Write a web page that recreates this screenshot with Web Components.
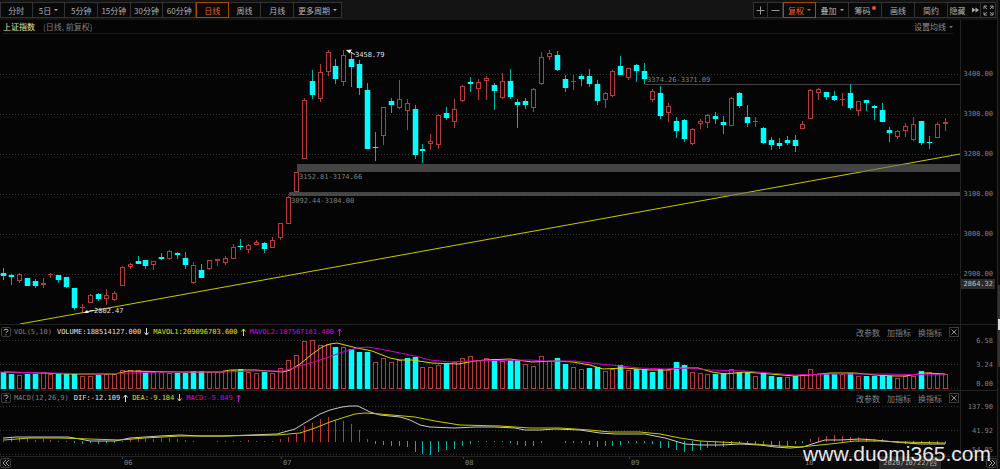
<!DOCTYPE html>
<html lang="zh-CN">
<head>
<meta charset="utf-8">
<title>上证指数 日线</title>
<style>
html, body { margin: 0; height: 100%; background: #050505; }
</style>
</head>
<body>
<stock-app></stock-app>

<template id="tpl-tool">
<style>
:host { display: flex; }
button { flex: 1; display: flex; align-items: center; justify-content: center; gap: 3px; margin: 0; padding: 0; min-width: 0;
  border: 1px solid #333; border-left-width: 0; background: #090909; color: #b0b0b0; font: inherit; white-space: nowrap; cursor: pointer; }
:host([first]) button { border-left-width: 1px; }
:host([active]) button { color: #f06010; border: 1px solid #b04408; }
i { width: 0; height: 0; border: 2px solid transparent; border-top-color: currentColor; border-bottom-width: 0; display: none; }
:host([menu]) i { display: block; }
b { display: none; width: 4px; height: 4px; border-radius: 50%; background: #ff4040; margin: -5px 0 0 -2px; }
:host([dot]) b { display: block; }
</style>
<button type="button"><slot></slot><i></i><b></b></button>
</template>

<template id="tpl-bar">
<style>
:host { display: flex; justify-content: space-between; box-sizing: border-box; height: 20px; padding: 2px 1px 2px 0; background: #141414; }
div { display: flex; }
.periods { width: 294px; }
.periods > * { flex: 1 1 0; }
.more { width: 48px; }
.ico { width: 15px; }
.std { width: 33px; }
svg { display: block; fill: none; stroke: #999; stroke-width: 1; }
</style>
<div>
  <div class="periods">
    <tool-button first>分时</tool-button><tool-button menu>5日</tool-button><tool-button>5分钟</tool-button>
    <tool-button>15分钟</tool-button><tool-button>30分钟</tool-button><tool-button>60分钟</tool-button>
    <tool-button active>日线</tool-button><tool-button>周线</tool-button><tool-button>月线</tool-button>
  </div>
  <tool-button class="more" menu>更多周期</tool-button>
</div>
<div>
  <tool-button first class="ico"><svg width="9" height="9"><path d="M0.500 4.500h8M4.500 .5v8"/></svg></tool-button>
  <tool-button class="ico"><svg width="9" height="9"><path d="M.5 4.500h8"/></svg></tool-button>
  <tool-button class="std" active menu>复权</tool-button>
  <tool-button class="std" menu>叠加</tool-button>
  <tool-button class="std" dot>筹码</tool-button>
  <tool-button class="std">画线</tool-button>
  <tool-button class="std">简约</tool-button>
  <tool-button class="std">隐藏<svg width="7" height="6" style="margin-left:3px"><path fill="#aaa" stroke="none" d="M0 0.500l3.500 2.500-3.500 2.500zM3.500 .5l3.500 2.500-3.500 2.500z"/></svg></tool-button>
  <tool-button class="ico"><svg width="11" height="11"><path d="M1 4V1h3M1 1l3 3M7 1h3v3M10 1L7 4M1 7v3h3M1 10l3-3M10 7v3H7M10 10L7 7"/></svg></tool-button>
</div>
</template>

<template id="tpl-title">
<style>
:host { display: grid; grid-template-columns: 1fr 37px; height: 14px; }
header { display: flex; align-items: center; margin: 0 7px 0 3px; border-bottom: 1px solid #1a1a1a; color: #808080; }
h1 { margin: 0 8px 0 0; font: inherit; color: #e6e69a; }
button { margin-left: auto; padding: 0; border: 0; background: none; font: inherit; color: #909090; display: flex; align-items: center; gap: 3px; }
i { border: 2px solid transparent; border-top-color: #777; border-bottom-width: 0; }
aside { border-left: 1px solid #222; }
</style>
<header><h1>上证指数</h1><span>(日线, 前复权)</span><button type="button">设置均线<i></i></button></header><aside></aside>
</template>

<template id="tpl-head">
<style>
:host { display: flex; align-items: center; height: 14px; padding: 0 1px; white-space: nowrap; }
button { padding: 0; margin: 0; border: 0; background: none; font: inherit; color: #808080; }
.box { width: 10px; height: 10px; box-sizing: border-box; border: 1px solid #3c3c3c; border-radius: 2px; display: flex; align-items: center; justify-content: center; color: #bbb; }
.vals { display: flex; align-items: center; font: 7px "DejaVu Sans Mono", monospace; margin-left: 3px; }
.name { color: #808080; margin-right: 5px; }
.val { display: flex; align-items: center; margin-right: 4px; gap: 3px; }
svg { fill: none; stroke: currentColor; display: block; }
.acts { margin-left: auto; display: flex; align-items: center; gap: 7px; font: 8px "Noto Sans CJK SC", sans-serif; }
.close { border-radius: 0; }
</style>
<button class="box" type="button" aria-label="帮助"><svg width="6" height="8"><path d="M1 2.500C1 .8 5 .8 5 2.500 5 4 3 3.500 3 5.200M3 6.300v1"/></svg></button>
<div class="vals"></div>
<div class="acts"><button type="button">改参数</button><button type="button">加指标</button><button type="button">换指标</button>
<button class="box close" type="button" aria-label="关闭"><svg width="6" height="6" stroke-width=".8"><path d="M.5 .5l5 5M5.500 .5l-5 5"/></svg></button></div>
</template>

<template id="tpl-panel">
<style>
:host { display: grid; grid-template-columns: 1fr 37px; position: relative; box-sizing: border-box; min-height: 0; }
.plot { display: grid; grid-template: minmax(0, 1fr) / minmax(0, 1fr); position: relative; min-height: 0; }
svg { grid-area: 1 / 1; width: 100%; height: 100%; min-height: 0; display: block; }
slot { display: block; grid-area: 1 / 1; align-self: start; position: relative; }
.axis { border-left: 1px solid #222; position: relative; }
span { position: absolute; transform: translateY(-50%); white-space: nowrap; font: 7px/8px "DejaVu Sans Mono", monospace; color: #808080; }
.axis span { right: 4px; }
.axis .now { background: #2c2c2c; color: #c0c0c0; right: 2px; padding: 1px 2px; }
.plot .mark { color: #e0e0e0; }
</style>
<div class="plot"><svg preserveAspectRatio="none"></svg><slot></slot></div>
<div class="axis"></div>
</template>

<template id="tpl-dates">
<style>
:host { display: flex; align-items: center; position: relative; height: 13px; box-sizing: border-box; border-top: 1px solid #222; background: #080808;
  font: 7px "DejaVu Sans Mono", monospace; color: #808080; }
button { width: 11px; height: 10px; padding: 0; border: 1px solid #3a3a3a; background: #111; border-radius: 2px; display: flex; align-items: center; justify-content: center; }
svg { fill: none; stroke: #999; flex: none; }
.track { flex: 1; position: relative; align-self: stretch; }
.track span { position: absolute; top: 0; line-height: 13px; padding-left: 2px; }
.track span::before { content: ""; position: absolute; left: 0; top: 0; height: 2px; border-left: 1px solid #444; }
.track .day { background: #2b2b2b; color: #b0b0b0; width: 62px; padding: 0; text-align: center; font: 7px/12px "DejaVu Sans Mono", "Noto Sans CJK SC", monospace; }
.track .day::before { display: none; }
</style>
<button type="button" aria-label="向前"><svg width="8" height="8"><path d="M4 1L1 4l3 3M7 1L4 4l3 3"/></svg></button>
<div class="track"></div>
<button type="button" aria-label="向后"><svg width="8" height="8"><path d="M1 1l3 3-3 3M4 1l3 3-3 3"/></svg></button>
</template>

<template id="tpl-app">
<style>
:host { display: flex; min-height: 100vh; position: relative; background: #050505; font: 8px "Noto Sans CJK SC", sans-serif; color: #888; overflow: hidden; }
main { flex: 1; min-width: 0; display: flex; flex-direction: column; border-right: 1px solid #262626; }
.price { flex: 1; min-height: 200px; }
.ind { height: 66px; border-top: 1px solid #222; }
.rail { width: 2px; background: #0c0c0c; display: flex; flex-direction: column; }
.rail::before { content: ""; flex: 285; }
.rail::after { content: ""; flex: 102; }
.rail i { flex: 82; background: linear-gradient(#333 42%, #ddd 42%, #ddd 55%, #333 55%); }
.water { position: absolute; right: 9px; bottom: 3px; font: 21px/24px "Liberation Sans", sans-serif; color: #e8e8e8; }
</style>
<main>
  <top-bar></top-bar>
  <title-row></title-row>
  <chart-panel class="price" kind="price"></chart-panel>
  <chart-panel class="ind" kind="volume"><indicator-head kind="volume"></indicator-head></chart-panel>
  <chart-panel class="ind" kind="macd"><indicator-head kind="macd"></indicator-head></chart-panel>
  <date-axis></date-axis>
</main>
<div class="rail"><i></i></div>
<div class="water">www.duomi365.com</div>
</template>

<script>
// One candle per entry: direction, high, body top, body bottom, low (chart units).
const CANDLES = `C268,273,276,280 C274,275,277,285 R273,274,281,283 C278,278,286,286 C279,281,286,288 R278,283,285,288 R273,274,275,278 C275,275,280,283 C277,277,287,288 C288,288,308,310
R304,307,308,312 R294,295,303,303 C293,294,299,301 R289,295,299,305 R291,293,300,301 R266,267,286,286 R263,264,267,269 C256,261,264,264 C260,260,266,269 R261,261,265,270
C253,257,259,260 R250,251,259,260 C252,253,255,259 C252,258,265,269 R262,265,283,284 C264,270,278,278 R260,260,269,270 R259,259,261,266 R256,258,263,265 R244,247,259,259
C239,246,247,250 R244,245,250,253 R240,242,245,245 C242,243,249,253 R237,240,248,248 R223,223,238,240 R196,197,224,224 R172,172,192,192 R98,100,159,159 C70,81,95,99
R64,72,99,102 R50,52,72,76 C59,66,79,84 R50,55,82,86 C53,59,67,87 C60,64,88,95 C83,90,149,149 C132,147,148,161 R107,107,136,145 C98,101,105,113
R80,99,108,109 R99,103,111,130 C105,109,155,159 C144,149,151,163 R134,141,144,150 R114,115,145,149 C107,113,118,120 R99,109,122,128 R85,86,101,102 C77,82,84,92
R79,82,89,100 R76,78,81,100 C83,85,91,110 R73,81,98,99 C69,81,97,99 C99,102,105,128 C98,101,105,109 R88,89,108,112 R52,57,84,85 R50,53,57,60
C51,55,70,71 C75,79,88,92 R75,81,82,90 C74,76,79,86 C69,76,84,87 C80,84,101,105 R92,93,100,108 R70,71,96,97 C56,66,75,75 R68,68,78,80
C64,65,71,82 C63,71,79,84 R89,91,100,102 C86,93,116,119 R103,106,113,122 C117,121,131,138 C119,120,139,142 R128,129,144,145 R119,121,124,129 R114,115,123,128
C112,116,119,124 C116,122,125,134 R97,98,126,126 C92,93,106,108 C105,117,123,127 R117,121,122,127 C127,128,143,144 C137,140,145,150 C138,143,146,149 C136,140,143,145
C135,140,146,152 R121,124,129,129 R89,90,119,119 R88,89,93,100 C92,92,97,100 C91,96,100,101 R93,99,100,106 C84,93,108,110 R101,101,111,116 C100,100,103,111
C105,106,108,120 C103,110,122,122 C127,130,133,142 R130,131,137,139 R123,126,131,137 R117,124,140,141 C121,121,143,145 C136,142,143,149 R122,124,138,138 R118,122,124,131`
  .split(/\s+/).map(s => ({ up: s[0] === 'R', v: s.slice(1).split(',').map(Number) }));
// Negative volume: close below the previous close.
const VOLUMES = [-17,-15,14,-15,-15,17,15,-15,-15,-15,13,13,-14,15,15,19,19,19,-17,17,17,16,-16,-16,-18,-18,17,17,19,19,-20,17,16,-17,16,21,29,34,48,49,
  44,45,-42,42,-40,-37,-37,27,31,27,29,-31,-32,22,22,24,-26,27,31,33,29,31,-30,28,-29,-29,25,23,33,28,-31,-25,22,20,-21,-22,18,20,-24,19,
  -20,-20,-17,-20,19,-27,-24,17,16,15,-15,-16,20,-17,-17,13,-16,-13,-12,12,-13,15,20,15,-15,-15,15,-16,13,-13,-13,-14,-13,11,13,13,-18,17,15,15];
const HIST = [5,5,4,4,2,3,2,1,1,-2,-3,-2,-3,-2,-2,1,3,3,3,3,4,4,3,2,1,0,0,1,1,1,1,2,1,1,1,3,5,8,16,19,23,25,22,21,18,12,3,-3,-4,-5,-5,-6,-11,-13,-14,-11,-9,-8,-5,-3,
  -1,-1,-1,-1,-2,-4,-5,-5,-2,0,0,-2,-2,-2,-4,-6,-5,-5,-4,-2,-2,-2,-3,-7,-7,-9,-11,-10,-9,-7,-6,-6,-4,-2,-2,-3,-3,-4,-6,-5,-3,-2,3,5,6,7,6,5,5,4,3,3,1,-2,-3,-3,-2,-3,-3,-3];
const MA1 = '4,372 40,373 70,374 115,374 128,371 180,372 222,372 230,370 255,370 283,372 290,370 300,364 311,355 322,347 330,344 337,343 345,345 357,348 372,351 390,358 400,360 412,360 432,363 458,364 475,361 485,360 510,359 532,362 555,361 573,362 590,365 603,369 625,368 650,370 665,370 680,368 698,368 712,372 725,374 745,372 770,374 795,376 810,375 830,373 855,373 875,375 895,376 905,376 925,373 945,374';
const MA2 = '0,372 50,373 100,374 130,373 160,372 222,372 255,371 283,371 300,366 320,360 340,353 357,348 368,347 380,349 400,353 415,356 430,360 450,362 470,361 530,360 545,361 575,361 600,364 620,366 640,368 665,369 690,368 710,370 745,371 770,373 795,375 830,374 880,374 945,375';
const DIF = '4,438 16,437 68,437 80,439 90,441 115,441 130,438 160,436 180,435 200,436 225,436 250,435 277,434 295,429 308,421 320,414 330,410 342,407 350,406 358,406 362,408 370,412 380,415 400,417 410,420 420,425 430,427 455,428 475,427 495,427 515,428 525,430 540,430 555,429 580,430 600,433 615,434 645,434 655,436 665,438 675,441 685,444 700,445 720,445 740,444 760,445 775,447 790,448 803,447 815,443 825,440 840,440 860,439 875,440 895,442 920,444 945,444';
const DEA = '4,440 30,438 60,438 90,439 120,440 145,438 180,436 220,436 277,435 300,433 315,428 330,422 342,418 355,414 365,413 380,414 415,417 435,421 460,425 500,426 530,428 560,428 590,430 610,432 640,432 660,434 680,438 700,441 740,443 780,446 800,447 830,444 855,441 880,441 900,442 945,443';

const W = 960, RED = '#b43c3c', CYAN = '#00ffff';
const slotX = i => Math.floor(3.5 + 7.915 * i);
const rect = (x, y, w, h, fill) => `<rect x="${x}" y="${y}" width="${w}" height="${h}" fill="${fill}"/>`;
const hollow = (x, y, w, h) => `<rect x="${x + .5}" y="${y + .5}" width="${w - 1}" height="${Math.max(h - 1, 1)}" fill="#050505" stroke="${RED}"/>`;
const curve = (pts, c) => `<polyline points="${pts}" fill="none" stroke="${c}"/>`;
const grid = ys => ys.map(y => `<path d="M0 ${y + .5}H${W}" stroke="#383838" stroke-dasharray="1 2"/>`).join('');

function drawPrice() {
  let s = grid([74, 114, 154, 194, 234, 274]);
  s += `<path d="M645 84.500H${W}" stroke="#444"/>`;
  s += '<path d="M20 324L960 154" stroke="#c8c800" fill="none"/>';
  s += rect(297, 164, W - 297, 8, 'rgba(110,110,110,.6)') + rect(289, 192, W - 289, 4, 'rgba(110,110,110,.6)');
  CANDLES.forEach(({ up, v: [hi, top, bot, lo] }, i) => {
    const x = slotX(i);
    s += rect(x, hi, 1, Math.max(lo - hi, 1), up ? RED : '#00b4b4');
    if (!up) s += rect(x - 2.25, top, 5.5, Math.max(bot - top, 1), CYAN);
    else s += bot - top < 2 ? rect(x - 2, top, 5, 1, RED) : hollow(x - 2, top, 5, bot - top);
  });
  s += '<path d="M346 50l6-.5-2.500 4z" fill="#eee"/><path d="M350 51.500l3 2 2 1" stroke="#ddd" fill="none"/>';
  s += '<path d="M84 313l3-3 2 3z" fill="#eee"/><path d="M87 312l4-1.500 3 0" stroke="#ddd" fill="none"/>';
  return s;
}
function drawVolume() {
  let s = grid([340, 364, 388]);
  VOLUMES.forEach((v, i) => {
    const x = slotX(i) - 2, h = Math.abs(v);
    s += v < 0 ? rect(x - .25, 389 - h, 5.5, h, CYAN) : hollow(x, 389 - h, 5, h);
  });
  return s + curve(MA1, '#d8d800') + curve(MA2, '#d000d0');
}
function drawMacd() {
  let s = grid([406, 430, 454]);
  HIST.forEach((v, i) => { if (v) s += rect(slotX(i), v > 0 ? 442 - v : 441, 1, Math.abs(v), v > 0 ? '#c83232' : '#00b4b4'); });
  return s + curve(DIF, '#c8c8c8') + curve(DEA, '#c8c800');
}
const PANELS = {
  price: { y: 34, h: 290, draw: drawPrice,
    axis: [['3400.00', 74], ['3300.00', 114], ['3200.00', 154], ['3100.00', 194], ['3000.00', 234], ['2900.00', 274], ['2864.32', 284, 'now']],
    notes: [['3458.79', 355, 55, 'mark'], ['2802.47', 94, 311, 'mark'], ['3374.26-3371.09', 647, 80], ['3152.81-3174.66', 299, 177], ['3092.44-3104.00', 291, 201]] },
  volume: { y: 325, h: 65, draw: drawVolume, axis: [['6.58', 341], ['3.24', 365], ['0.00', 384]], notes: [] },
  macd: { y: 391, h: 65, draw: drawMacd, axis: [['137.90', 407], ['41.92', 431], ['-54.05', 450]], notes: [] }
};
const HEADS = {
  volume: ['VOL(5,10)', [['VOLUME:188514127.000', '#e0e0e0', 0], ['MAVOL1:209096703.600', '#e0e000', 1], ['MAVOL2:187567181.400', '#d800d8', 1]]],
  macd: ['MACD(12,26,9)', [['DIF:-12.109', '#e0e0e0', 1], ['DEA:-9.184', '#e0e000', 0], ['MACD:-5.849', '#d800d8', 1]]]
};

class Base extends HTMLElement {
  constructor() {
    super();
    this.attachShadow({ mode: 'open' }).append(document.getElementById(this.constructor.tpl).content.cloneNode(true));
  }
  $(q) { return this.shadowRoot.querySelector(q); }
}
class ToolButton extends Base { static tpl = 'tpl-tool'; }
class TopBar extends Base { static tpl = 'tpl-bar'; }
class TitleRow extends Base { static tpl = 'tpl-title'; }
class StockApp extends Base { static tpl = 'tpl-app'; }
class IndicatorHead extends Base {
  static tpl = 'tpl-head';
  connectedCallback() {
    const [name, vals] = HEADS[this.getAttribute('kind')];
    this.$('.vals').innerHTML = `<span class="name">${name}</span>` + vals.map(([t, c, up]) =>
      `<span class="val" style="color:${c}">${t}<svg width="5" height="8"><path d="${up ? 'M2.500 8V1M.5 3.500l2-2.500 2 2.500' : 'M2.500 0v7M.5 4.500l2 2.500 2-2.500'}"/></svg></span>`).join('');
  }
}
class ChartPanel extends Base {
  static tpl = 'tpl-panel';
  connectedCallback() {
    const p = PANELS[this.getAttribute('kind')], svg = this.$('svg');
    const pct = y => (y - p.y) / p.h * 100 + '%';
    svg.setAttribute('viewBox', `0 ${p.y} ${W} ${p.h}`);
    svg.innerHTML = p.draw();
    this.$('.axis').innerHTML = p.axis.map(([t, y, c = '']) => `<span class="${c}" style="top:${pct(y)}">${t}</span>`).join('');
    this.$('.plot').insertAdjacentHTML('beforeend', p.notes.map(([t, x, y, c = '']) =>
      `<span class="${c}" style="top:${pct(y)};left:${x / W * 100}%">${t}</span>`).join(''));
  }
}
class DateAxis extends Base {
  static tpl = 'tpl-dates';
  connectedCallback() {
    this.$('.track').innerHTML = [['06', 122], ['07', 281], ['08', 463], ['09', 629], ['10', 803], ['2020/10/22/四', 879, 'day']]
      .map(([t, x, c = '']) => `<span class="${c}" style="left:${(x - 11) / 975 * 100}%">${t}</span>`).join('');
  }
}
customElements.define('tool-button', ToolButton);
customElements.define('top-bar', TopBar);
customElements.define('title-row', TitleRow);
customElements.define('indicator-head', IndicatorHead);
customElements.define('chart-panel', ChartPanel);
customElements.define('date-axis', DateAxis);
customElements.define('stock-app', StockApp);
</script>
</body>
</html>
